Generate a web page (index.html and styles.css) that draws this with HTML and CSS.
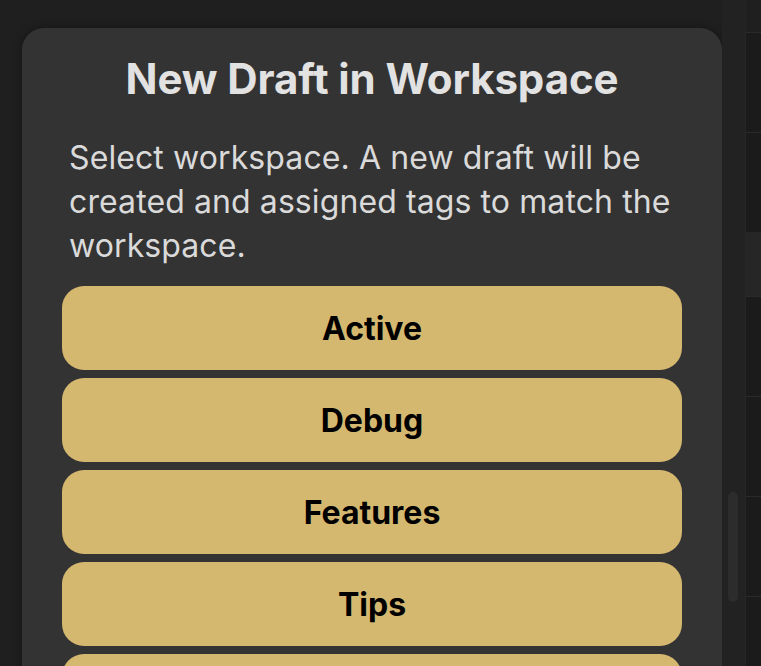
FILE: index.html
```html
<!DOCTYPE html>
<html lang="en">
<head>
<meta charset="utf-8">
<title>New Draft in Workspace</title>
<link rel="stylesheet" href="styles.css">
</head>
<body>
<div class="screen">
  <main class="stage">
    <section class="sheet">
      <h1 class="sheet-title">New Draft in Workspace</h1>
      <p class="sheet-desc">Select workspace. A new draft will be created and assigned tags to match the workspace.</p>
      <div class="choices">
        <button class="choice">Active</button>
        <button class="choice">Debug</button>
        <button class="choice">Features</button>
        <button class="choice">Tips</button>
        <button class="choice" aria-label="More"></button>
      </div>
    </section>
  </main>
  <div class="gutter"><div class="thumb"></div></div>
  <aside class="list">
    <div class="row row-top"></div>
    <div class="row"></div>
    <div class="row row-short"></div>
    <div class="row row-sel"></div>
    <div class="row"></div>
    <div class="row"></div>
    <div class="row"></div>
  </aside>
</div>
</body>
</html>
```

FILE: styles.css
```css
* { box-sizing: border-box; }
html, body {
  margin: 0;
  height: 100%;
  background: #1f1f1f;
  overflow: hidden;
}
.screen {
  display: flex;
  width: 761px;
  height: 666px;
  font-family: "Inter", "Noto Sans", sans-serif;
}
.stage {
  width: 722px;
  padding: 28px 0 0 22px;
  overflow: hidden;
}
.sheet {
  width: 700px;
  height: 700px;
  background: #333333;
  border-radius: 22px;
  box-shadow: 0 0 10px rgba(0, 0, 0, 0.35);
  padding: 25px 40px 0;
}
.sheet-title {
  margin: 0;
  text-align: center;
  color: #e2e2e2;
  font-size: 42px;
  line-height: 52px;
  font-weight: 700;
  letter-spacing: -0.1px;
}
.sheet-desc {
  margin: 31px 0 0;
  padding: 0 0 0 7px;
  color: #dadada;
  font-size: 32px;
  line-height: 44px;
  font-weight: 400;
  letter-spacing: 0.1px;
}
.choices {
  margin-top: 18px;
  display: flex;
  flex-direction: column;
  gap: 8px;
}
.choice {
  display: block;
  width: 100%;
  height: 84px;
  border: 0;
  border-radius: 22px;
  background: #d5b86f;
  color: #000;
  font-family: inherit;
  font-size: 32px;
  font-weight: 700;
  text-align: center;
  padding: 0;
}
.gutter {
  width: 23px;
  background: #222222;
  position: relative;
}
.thumb {
  position: absolute;
  left: 6px;
  top: 492px;
  width: 10px;
  height: 110px;
  border-radius: 5px;
  background: #2c2c2c;
}
.list {
  flex: 1;
  background: #1b1b1b;
  border-left: 1px solid #262626;
  display: flex;
  flex-direction: column;
}
.row {
  height: 100px;
  border-bottom: 1px solid #2a2a2a;
  flex: none;
}
.row-top {
  height: 33px;
  background: #1f1f1f;
}
.row-short {
  height: 99px;
  border-bottom: 0;
}
.row-sel {
  height: 65px;
  background: #262626;
}
```
